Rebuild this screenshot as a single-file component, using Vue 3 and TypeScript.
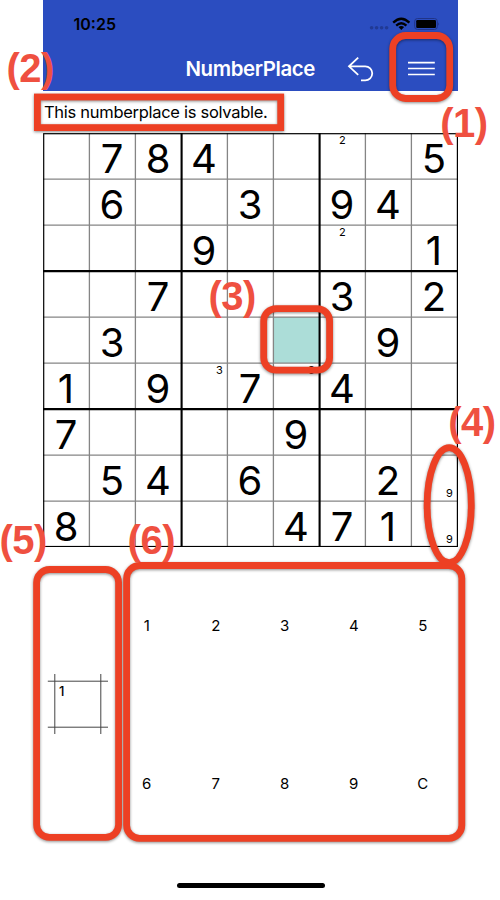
<script setup lang="ts">
type Corner = 'top' | 'right' | 'low'
interface Note { value: string; place: Corner }
interface Frame { x: number; y: number; w: number; h: number; r: number }
interface Label { text: string; x: number; y: number }

const rows: string[] = [
  '.784....5',
  '.6..3.94.',
  '...9....1',
  '..7...3.2',
  '.3.....9.',
  '1.9.7.4..',
  '7....9...',
  '.54.6..2.',
  '8....471.',
]
const cells = rows.join('').split('').map((c) => (c === '.' ? '' : c))

const notes: Record<number, Note> = {
  6: { value: '2', place: 'top' },
  24: { value: '2', place: 'top' },
  48: { value: '3', place: 'right' },
  50: { value: '3', place: 'right' },
  71: { value: '9', place: 'low' },
  80: { value: '9', place: 'low' },
}
const selected = 41

const thin = [1, 2, 4, 5, 7, 8]
const thick = [3, 6]
const keys = ['1', '2', '3', '4', '5', '6', '7', '8', '9', 'C']

const frames: Frame[] = [
  { x: 392.7, y: 35.5, w: 57, h: 63, r: 13 },
  { x: 37.4, y: 97, w: 243.3, h: 30.6, r: 0 },
  { x: 263.7, y: 308.6, w: 65.9, h: 61.6, r: 12.5 },
  { x: 36.6, y: 569.5, w: 82, h: 267.9, r: 13 },
  { x: 126.6, y: 565.5, w: 335.2, h: 272.8, r: 13 },
]
const labels: Label[] = [
  { text: '(1)', x: 440.3, y: 137 },
  { text: '(2)', x: 6.4, y: 81.5 },
  { text: '(3)', x: 208.4, y: 310 },
  { text: '(4)', x: 448.3, y: 435.7 },
  { text: '(5)', x: -0.6, y: 553.7 },
  { text: '(6)', x: 127.6, y: 553.7 },
]
</script>

<template>
  <main class="page">
    <section class="phone">
      <header class="header">
        <div class="status">
          <span class="time">10:25</span>
          <svg class="signals" width="72" height="16" viewBox="0 0 72 16">
            <g fill="#213a94">
              <circle cx="3.6" cy="11.8" r="1.8" />
              <circle cx="8.6" cy="11.8" r="1.8" />
              <circle cx="13.6" cy="11.8" r="1.8" />
              <circle cx="18.6" cy="11.8" r="1.8" />
            </g>
            <g fill="none" stroke="#000" stroke-width="2.3">
              <path d="M25.2 6.6Q33.2 -1.2 41.4 6.6" />
              <path d="M28.2 9.6Q33.3 4.8 38.4 9.6" />
            </g>
            <path d="M30.5 11.1Q33.3 8.9 36.1 11.1L33.3 13.9Z" />
            <rect x="46.7" y="2.5" width="22.6" height="11" rx="2.8" fill="none" stroke="#203488" />
            <rect x="48.2" y="4.1" width="19.8" height="7.9" rx="1.2" />
            <path d="M70.2 6.2Q72 8 70.2 9.8Z" fill="#203488" />
          </svg>
        </div>
        <div class="bar">
          <h1 class="title">NumberPlace</h1>
          <svg class="undo" width="28" height="28" viewBox="0 0 28 28" fill="none" stroke="#fff" stroke-width="1.8">
            <path d="M11.2 1.6L2 10.3L11.2 18.8M2.2 10.3H18.2A7 7 0 0 1 18.2 24.4H14" />
          </svg>
          <svg class="menu" width="28" height="16" viewBox="0 0 28 16" stroke="#fff" stroke-width="1.6">
            <path d="M1 1.6H27.8M1 7.5H27.8M1 13.5H27.8" />
          </svg>
        </div>
      </header>

      <p class="message">This numberplace is solvable.</p>

      <div class="board">
        <div
          v-for="(cell, i) in cells"
          :key="i"
          class="cell"
          :class="{ selected: i === selected }"
        >
          <span v-if="cell">{{ cell }}</span>
          <small v-if="notes[i]" :class="notes[i].place">{{ notes[i].value }}</small>
        </div>
        <svg class="lines" width="415" height="414" viewBox="0 0 415 414" fill="none">
          <g stroke="#858585" stroke-width="1.3">
            <template v-for="n in thin" :key="n">
              <path :d="`M${n * 46 + 0.4} 0V414`" />
              <path :d="`M0 ${n * 46 + 0.1}H415`" />
            </template>
          </g>
          <g stroke="#000" stroke-width="2.1">
            <template v-for="n in thick" :key="n">
              <path :d="`M${n * 46 + 0.6} 0V414`" />
              <path :d="`M0 ${n * 46 + 0.1}H415`" />
            </template>
          </g>
          <rect x=".7" y=".7" width="413.7" height="412.8" stroke="#000" stroke-width="1.2" />
        </svg>
      </div>

      <div class="controls">
        <div class="position">
          <svg width="62" height="62" viewBox="0 0 62 62" stroke="#444" fill="none">
            <path d="M7.8 1V61M53.8 1V61M.8 8.2H61M.8 54.2H61" />
          </svg>
          <b class="mark">1</b>
        </div>
        <div class="keypad">
          <span v-for="key in keys" :key="key" class="key">{{ key }}</span>
        </div>
      </div>
      <div class="home"></div>
    </section>

    <svg class="guides" width="500" height="900" viewBox="0 0 500 900">
      <g class="outlines" fill="none" stroke="#ed4024" stroke-width="6.8">
        <rect
          v-for="(f, i) in frames"
          :key="i"
          :x="f.x"
          :y="f.y"
          :width="f.w"
          :height="f.h"
          :rx="f.r"
        />
        <ellipse cx="449.2" cy="505.2" rx="22.1" ry="57.5" />
      </g>
      <text v-for="l in labels" :key="l.text" :x="l.x" :y="l.y">{{ l.text }}</text>
    </svg>
  </main>
</template>

<style>
body {
  background: #fff;
}
</style>

<style scoped>
.page {
  position: relative;
  width: 500px;
  height: 900px;
  overflow: hidden;
  font-family: Inter, "Liberation Sans", sans-serif;
  color: #000;
}
.phone {
  width: 415px;
  height: 900px;
  margin-left: 43px;
  display: flex;
  flex-direction: column;
}
.header {
  height: 91px;
  flex: none;
  background: #2b4dc0;
}
.status {
  height: 46px;
  display: flex;
  justify-content: space-between;
  padding: 0 18px 0 30.5px;
  box-sizing: border-box;
}
.time {
  font-size: 16px;
  font-weight: 600;
  line-height: 20px;
  padding-top: 14px;
}
.signals {
  margin-top: 16px;
}
.bar {
  height: 45px;
  display: grid;
  grid-template-columns: 142.5px 129.5px 32px 28px 32px 28px;
  align-items: center;
}
.title {
  grid-column: 2;
  margin: 0;
  color: #fff;
  font-size: 20.4px;
  font-weight: 600;
  letter-spacing: -0.38px;
  line-height: 45px;
  white-space: nowrap;
}
.undo {
  grid-column: 4;
  margin-top: 2px;
}
.menu {
  grid-column: 6;
}
.message {
  margin: 0;
  height: 42px;
  flex: none;
  box-sizing: border-box;
  padding: 10px 0 0 1px;
  font-size: 16.5px;
  letter-spacing: -0.29px;
  line-height: 22px;
  white-space: nowrap;
}
.board {
  position: relative;
  height: 414px;
  flex: none;
  display: grid;
  grid-template-columns: repeat(9, 46px);
  grid-template-rows: repeat(9, 46px);
}
.cell {
  position: relative;
  display: flex;
  align-items: center;
  justify-content: center;
  font-size: 40px;
  font-weight: 400;
  line-height: 42px;
}
.cell span {
  padding-top: 5px;
}
.cell.selected {
  background: #acddd8;
}
.cell small {
  position: absolute;
  font-size: 11px;
  line-height: 14px;
}
.top {
  left: 20px;
  top: 0;
}
.right {
  left: 35px;
  top: 0;
}
.low {
  left: 35px;
  bottom: 1px;
}
.lines {
  position: absolute;
  left: 0;
  top: 0;
}
.controls {
  height: 316px;
  flex: none;
  display: flex;
}
.position {
  position: relative;
  width: 69px;
  padding: 126px 0 0 4px;
  box-sizing: border-box;
}
.mark {
  position: absolute;
  left: 16px;
  top: 136px;
  font-size: 13px;
  font-weight: 500;
  line-height: 16px;
}
.keypad {
  flex: 1;
  display: grid;
  grid-template-columns: repeat(5, 69px);
  grid-template-rows: repeat(2, 158px);
}
.key {
  display: flex;
  align-items: center;
  justify-content: center;
  padding: 0 0 2px 0.5px;
  font-size: 15px;
}
.home {
  width: 148px;
  height: 5px;
  margin: 19.5px auto 0;
  border-radius: 3px;
  background: #000;
}
.guides {
  position: absolute;
  left: 0;
  top: 0;
  pointer-events: none;
}
.outlines {
  filter: drop-shadow(0 1.5px 1.5px rgba(0, 0, 0, 0.45));
}
.guides text {
  font-family: "Liberation Sans", Arial, sans-serif;
  font-size: 40px;
  font-weight: 700;
  letter-spacing: -0.5px;
  fill: #ef5040;
}
</style>
